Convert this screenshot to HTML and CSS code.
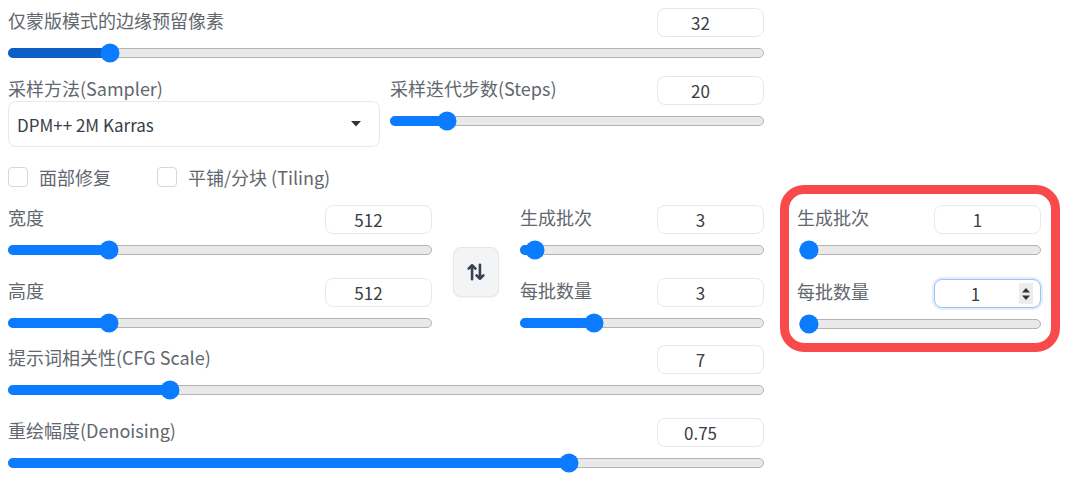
FILE: index.html
```html
<!DOCTYPE html>
<html lang="zh">
<head>
<meta charset="utf-8">
<title>Settings</title>
<link rel="stylesheet" href="styles.css">
</head>
<body>
<div class="wrap">
  <div class="main">
    <div class="block">
      <div class="head"><span class="label">仅蒙版模式的边缘预留像素</span><div class="num">32</div></div>
      <div class="track"><div class="fill dark" style="width:13.4%"></div><div class="thumb" style="left:13.4%"></div></div>
    </div>

    <div class="row2">
      <div class="sampler">
        <div class="label">采样方法(Sampler)</div>
        <div class="select"><span>DPM++ 2M Karras</span>
          <svg width="10" height="6" viewBox="0 0 10 6"><path d="M0 0H10L5 5.5Z" fill="#333"/></svg>
        </div>
      </div>
      <div class="block steps">
        <div class="head"><span class="label">采样迭代步数(Steps)</span><div class="num">20</div></div>
        <div class="track"><div class="fill" style="width:15%"></div><div class="thumb" style="left:15%"></div></div>
      </div>
    </div>

    <div class="checks">
      <label class="check"><span class="box"></span><span>面部修复</span></label>
      <label class="check"><span class="box"></span><span>平铺/分块 (Tiling)</span></label>
    </div>

    <div class="row4">
      <div class="group left">
        <div class="block">
          <div class="head"><span class="label">宽度</span><div class="num">512</div></div>
          <div class="track"><div class="fill" style="width:23.8%"></div><div class="thumb" style="left:23.8%"></div></div>
        </div>
        <div class="block">
          <div class="head"><span class="label">高度</span><div class="num">512</div></div>
          <div class="track"><div class="fill" style="width:23.8%"></div><div class="thumb" style="left:23.8%"></div></div>
        </div>
      </div>
      <div class="swap">
        <svg width="18" height="18" viewBox="0 0 16 16" fill="none" stroke="#374151" stroke-width="2.3" stroke-linecap="round" stroke-linejoin="round">
          <path d="M4.5 14.5V2M1.5 5L4.5 2L7.5 5"/>
          <path d="M11.5 1.5V14M8.5 11L11.5 14L14.5 11"/>
        </svg>
      </div>
      <div class="group mid">
        <div class="block">
          <div class="head"><span class="label">生成批次</span><div class="num">3</div></div>
          <div class="track"><div class="fill" style="width:5.8%"></div><div class="thumb" style="left:5.8%"></div></div>
        </div>
        <div class="block">
          <div class="head"><span class="label">每批数量</span><div class="num">3</div></div>
          <div class="track"><div class="fill" style="width:30%"></div><div class="thumb" style="left:30%"></div></div>
        </div>
      </div>
    </div>

    <div class="block cfg">
      <div class="head"><span class="label">提示词相关性(CFG Scale)</span><div class="num">7</div></div>
      <div class="track"><div class="fill" style="width:21.4%"></div><div class="thumb" style="left:21.4%"></div></div>
    </div>
    <div class="block denoise">
      <div class="head"><span class="label">重绘幅度(Denoising)</span><div class="num">0.75</div></div>
      <div class="track"><div class="fill" style="width:74.3%"></div><div class="thumb" style="left:74.3%"></div></div>
    </div>
  </div>

  <div class="side">
    <div class="panel">
      <div class="block">
        <div class="head"><span class="label">生成批次</span><div class="num">1</div></div>
        <div class="track"><div class="thumb" style="left:3.7%"></div></div>
      </div>
      <div class="block">
        <div class="head"><span class="label">每批数量</span>
          <div class="num focus">1
            <span class="spin"><svg width="10" height="16" viewBox="0 0 10 16"><path d="M1 6.5L5 2L9 6.5Z M1 9.5L5 14L9 9.5Z" fill="#333"/></svg></span>
          </div>
        </div>
        <div class="track"><div class="thumb" style="left:3.7%"></div></div>
      </div>
    </div>
  </div>
</div>
</body>
</html>
```

FILE: styles.css
```css
html, body {
  margin: 0;
  padding: 0;
  background: #ffffff;
}
body {
  font-family: "Noto Sans CJK SC", "Noto Sans", sans-serif;
  color: #62676e;
  width: 1080px;
  height: 482px;
  overflow: hidden;
}
.wrap {
  display: flex;
  padding: 8px 0 0 8px;
}
.main {
  width: 756px;
  display: flex;
  flex-direction: column;
}
.side {
  width: 280px;
  margin-left: 16px;
  padding-top: 177px;
}
.panel {
  box-sizing: border-box;
  width: 280px;
  height: 167px;
  border: 9px solid #f84a4b;
  border-radius: 24px;
  padding: 11px 10px 0 8px;
  display: flex;
  flex-direction: column;
  gap: 24px;
}
.panel .track {
  margin-left: 2px;
}
.block {
  display: flex;
  flex-direction: column;
}
.head {
  display: flex;
  justify-content: space-between;
  align-items: flex-start;
  height: 29px;
}
.label {
  font-size: 18px;
  line-height: 24px;
  color: #62676e;
}
.num {
  position: relative;
  box-sizing: border-box;
  width: 107px;
  height: 29px;
  border: 1px solid #e6e8eb;
  border-radius: 8px;
  display: flex;
  align-items: center;
  justify-content: center;
  padding-right: 20px;
  font-size: 17px;
  color: #3a3d42;
  background: #fff;
}
.num.focus {
  border-color: #9cc4f5;
  box-shadow: 0 0 0 2px #e3eefc;
  padding-right: 24px;
}
.spin {
  position: absolute;
  right: 7px;
  top: 3px;
  width: 14px;
  height: 21px;
  background: #ececec;
  display: flex;
  align-items: center;
  justify-content: center;
}
.track {
  position: relative;
  box-sizing: border-box;
  height: 10px;
  margin-top: 11px;
  border: 1px solid #b3b3b3;
  background: #e9e9e9;
  border-radius: 5px;
}
.fill {
  position: absolute;
  left: -1px;
  top: -1px;
  bottom: -1px;
  background: #0b7bff;
  border-radius: 5px;
}
.fill.dark {
  background: #0c5fc6;
}
.thumb {
  position: absolute;
  top: 50%;
  width: 19px;
  height: 19px;
  border-radius: 50%;
  background: #0b7bff;
  transform: translate(-50%, -50%);
}
.row2 {
  display: flex;
  gap: 10px;
  margin-top: 18px;
}
.sampler {
  width: 372px;
  display: flex;
  flex-direction: column;
}
.sampler .label {
  margin-bottom: 1px;
}
.select {
  box-sizing: border-box;
  height: 46px;
  border: 1px solid #e6e8eb;
  border-radius: 8px;
  display: flex;
  align-items: center;
  justify-content: space-between;
  padding: 0 18px 0 8px;
  font-size: 17px;
  color: #3a3d42;
}
.steps {
  flex: 1;
}
.checks {
  display: flex;
  margin-top: 20px;
  height: 20px;
}
.check {
  display: flex;
  align-items: center;
  gap: 11px;
  font-size: 18px;
  line-height: 20px;
  color: #62676e;
  margin-right: 46px;
}
.box {
  box-sizing: border-box;
  width: 20px;
  height: 20px;
  border: 1px solid #d4d7dc;
  border-radius: 4px;
  background: #fff;
}
.row4 {
  display: flex;
  margin-top: 18px;
}
.group {
  display: flex;
  flex-direction: column;
  gap: 23px;
}
.group.left {
  width: 424px;
}
.group.mid {
  width: 244px;
  margin-left: 21px;
}
.swap {
  box-sizing: border-box;
  width: 46px;
  height: 50px;
  margin: 42px 0 0 21px;
  background: #f3f4f6;
  border: 1px solid #e5e7eb;
  border-radius: 8px;
  box-shadow: 0 1px 2px rgba(0,0,0,0.05);
  display: flex;
  align-items: center;
  justify-content: center;
}
.cfg {
  margin-top: 17px;
}
.denoise {
  margin-top: 23px;
}
```
